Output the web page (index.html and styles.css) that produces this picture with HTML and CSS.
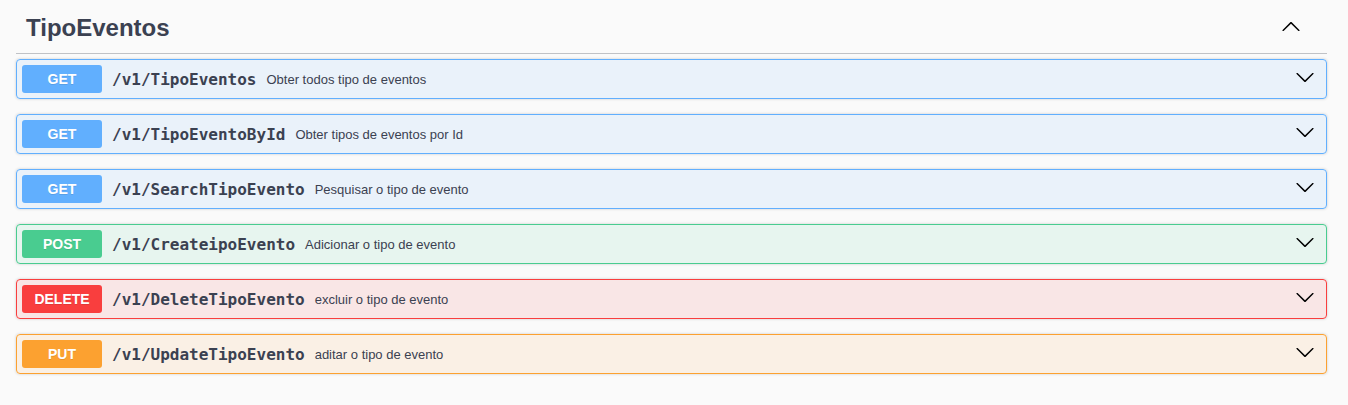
FILE: index.html
```html
<!DOCTYPE html>
<html lang="pt">
<head>
<meta charset="utf-8">
<title>TipoEventos</title>
<link rel="stylesheet" href="styles.css">
</head>
<body>
<div class="wrapper">
  <section class="tag-section">
    <h3 class="tag">
      <span class="tag-title">TipoEventos</span>
      <button class="expand" aria-label="collapse">
        <svg class="arrow" width="20" height="20" viewBox="0 0 20 20"><path d="M17.418 13.891c.272.268.709.268.979 0s.271-.701 0-.969l-7.908-7.83c-.27-.268-.707-.268-.979 0l-7.908 7.83c-.27.268-.27.701 0 .969.271.268.709.268.979 0L10 6.75l7.418 7.141z"/></svg>
      </button>
    </h3>
    <div class="ops">
      <div class="op op-get">
        <span class="method">GET</span>
        <span class="path">/v1/TipoEventos</span>
        <span class="desc">Obter todos tipo de eventos</span>
        <svg class="arrow chevron" width="20" height="20" viewBox="0 0 20 20"><path d="M17.418 6.109c.272-.268.709-.268.979 0s.271.701 0 .969l-7.908 7.83c-.27.268-.707.268-.979 0l-7.908-7.830c-.27-.268-.27-.701 0-.969.271-.268.709-.268.979 0L10 13.25l7.418-7.141z"/></svg>
      </div>
      <div class="op op-get">
        <span class="method">GET</span>
        <span class="path">/v1/TipoEventoById</span>
        <span class="desc">Obter tipos de eventos por Id</span>
        <svg class="arrow chevron" width="20" height="20" viewBox="0 0 20 20"><path d="M17.418 6.109c.272-.268.709-.268.979 0s.271.701 0 .969l-7.908 7.83c-.27.268-.707.268-.979 0l-7.908-7.83c-.27-.268-.27-.701 0-.969.271-.268.709-.268.979 0L10 13.25l7.418-7.141z"/></svg>
      </div>
      <div class="op op-get">
        <span class="method">GET</span>
        <span class="path">/v1/SearchTipoEvento</span>
        <span class="desc">Pesquisar o tipo de evento</span>
        <svg class="arrow chevron" width="20" height="20" viewBox="0 0 20 20"><path d="M17.418 6.109c.272-.268.709-.268.979 0s.271.701 0 .969l-7.908 7.83c-.27.268-.707.268-.979 0l-7.908-7.83c-.27-.268-.27-.701 0-.969.271-.268.709-.268.979 0L10 13.25l7.418-7.141z"/></svg>
      </div>
      <div class="op op-post">
        <span class="method">POST</span>
        <span class="path">/v1/CreateipoEvento</span>
        <span class="desc">Adicionar o tipo de evento</span>
        <svg class="arrow chevron" width="20" height="20" viewBox="0 0 20 20"><path d="M17.418 6.109c.272-.268.709-.268.979 0s.271.701 0 .969l-7.908 7.83c-.27.268-.707.268-.979 0l-7.908-7.83c-.27-.268-.27-.701 0-.969.271-.268.709-.268.979 0L10 13.25l7.418-7.141z"/></svg>
      </div>
      <div class="op op-delete">
        <span class="method">DELETE</span>
        <span class="path">/v1/DeleteTipoEvento</span>
        <span class="desc">excluir o tipo de evento</span>
        <svg class="arrow chevron" width="20" height="20" viewBox="0 0 20 20"><path d="M17.418 6.109c.272-.268.709-.268.979 0s.271.701 0 .969l-7.908 7.83c-.27.268-.707.268-.979 0l-7.908-7.83c-.27-.268-.27-.701 0-.969.271-.268.709-.268.979 0L10 13.25l7.418-7.141z"/></svg>
      </div>
      <div class="op op-put">
        <span class="method">PUT</span>
        <span class="path">/v1/UpdateTipoEvento</span>
        <span class="desc">aditar o tipo de evento</span>
        <svg class="arrow chevron" width="20" height="20" viewBox="0 0 20 20"><path d="M17.418 6.109c.272-.268.709-.268.979 0s.271.701 0 .969l-7.908 7.83c-.27.268-.707.268-.979 0l-7.908-7.83c-.27-.268-.27-.701 0-.969.271-.268.709-.268.979 0L10 13.25l7.418-7.141z"/></svg>
      </div>
    </div>
  </section>
</div>
</body>
</html>
```

FILE: styles.css
```css
html, body {
  margin: 0;
  padding: 0;
  background: #fafafa;
}
body {
  font-family: "Liberation Sans", Arial, sans-serif;
  color: #3b4151;
}
.wrapper {
  padding: 0 21px 0 16px;
}
.tag {
  display: flex;
  align-items: center;
  margin: 0;
  padding: 14px 20px 12px 10px;
  border-bottom: 1px solid rgba(59, 65, 81, 0.3);
  font-size: 24px;
  line-height: 27px;
  font-weight: 700;
  color: #3b4151;
}
.tag-title {
  flex: 1;
}
.expand {
  display: flex;
  align-items: center;
  padding: 0 6px 2px 0;
  margin: 0;
  border: none;
  background: none;
}
.arrow {
  display: block;
  fill: #000;
}
.ops {
  padding-top: 5px;
}
.op {
  display: flex;
  align-items: center;
  margin: 0 0 15px;
  padding: 5px;
  border: 1px solid;
  border-radius: 4px;
  box-shadow: 0 0 3px rgba(0, 0, 0, 0.19);
}
.method {
  min-width: 80px;
  padding: 6px 0;
  font-size: 14px;
  line-height: 16px;
  font-weight: 700;
  color: #fff;
  text-align: center;
  border-radius: 3px;
  text-shadow: 0 1px 0 rgba(0, 0, 0, 0.1);
}
.path {
  padding: 0 10px;
  font-family: "DejaVu Sans Mono", monospace;
  font-size: 16px;
  font-weight: 700;
  color: #3b4151;
}
.desc {
  flex: 1;
  font-size: 13px;
  color: #3b4151;
}
.chevron {
  margin: 0 6px 5px 0;
}
.op-get {
  border-color: #61affe;
  background: rgba(97, 175, 254, 0.1);
}
.op-get .method { background: #61affe; }
.op-post {
  border-color: #49cc90;
  background: rgba(73, 204, 144, 0.1);
}
.op-post .method { background: #49cc90; }
.op-delete {
  border-color: #f93e3e;
  background: rgba(249, 62, 62, 0.1);
}
.op-delete .method { background: #f93e3e; }
.op-put {
  border-color: #fca130;
  background: rgba(252, 161, 48, 0.1);
}
.op-put .method { background: #fca130; }
```
